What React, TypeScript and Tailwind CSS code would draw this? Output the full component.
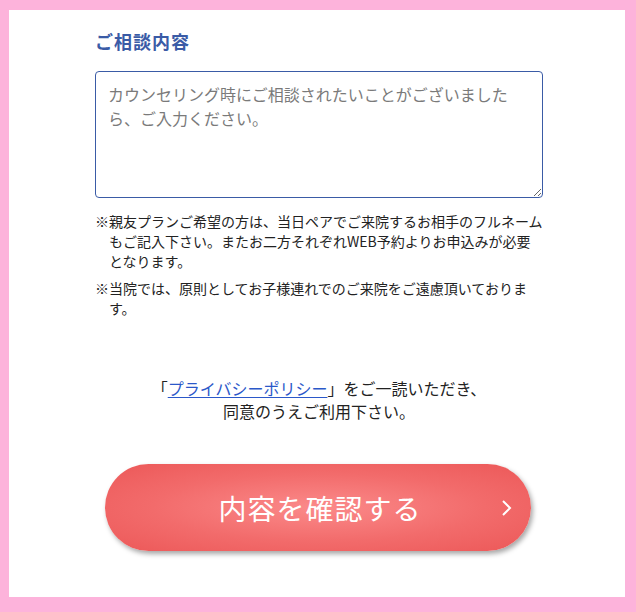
export default function App() {
  return (
    <div
      className="w-[636px] h-[612px] bg-[#fdb3db] pt-[10px] pl-[9px] pr-[11px] pb-[15px]"
      style={{ fontFamily: '"Noto Sans CJK JP", "Noto Sans", sans-serif' }}
    >
      <div className="h-full bg-white">
        <div className="ml-[86px] w-[448px] pt-[18px]">
          <h2 className="text-[18px] font-bold text-[#3a5ba6] leading-[26px] tracking-[1px]">ご相談内容</h2>
          <textarea
            className="mt-[17px] block w-[448px] h-[127px] rounded-[4px] border border-[#3a5ba6] px-[12px] py-[10px] text-[16px] leading-[24px] text-[#333] placeholder:text-[#7a7a7a] outline-none"
            placeholder="カウンセリング時にご相談されたいことがございましたら、ご入力ください。"
          />
          <div className="mt-[13px] text-[14px] leading-[20px] text-[#222]">
            <p className="pl-[14px] -indent-[14px]">
              ※親友プランご希望の方は、当日ペアでご来院するお相手のフルネームもご記入下さい。またお二方それぞれWEB予約よりお申込みが必要となります。
            </p>
            <p className="mt-[7px] pl-[14px] -indent-[14px]">
              ※当院では、原則としてお子様連れでのご来院をご遠慮頂いております。
            </p>
          </div>
          <p className="mt-[59px] text-center text-[16px] leading-[23px] text-[#222]">
            「<a href="#" className="text-[#2b58c9] underline underline-offset-2">プライバシーポリシー</a>」をご一読いただき、
            <br />
            同意のうえご利用下さい。
          </p>
        </div>
        <div className="flex justify-center pl-[2px] mt-[41px]">
          <button className="relative w-[426px] h-[87px] rounded-full bg-[radial-gradient(ellipse_at_center,#fb8a8a_0%,#f26b6b_55%,#ec5858_100%)] shadow-[2px_3px_5px_rgba(0,0,0,0.35)] text-white text-[28px] tracking-[1px]">
            <span className="pl-[4px]">内容を確認する</span>
            <svg
              className="absolute right-[19px] top-1/2 -translate-y-1/2"
              width="12"
              height="18"
              viewBox="0 0 12 18"
              fill="none"
              stroke="white"
              strokeWidth="2"
            >
              <path d="M3 2l7 7-7 7" />
            </svg>
          </button>
        </div>
      </div>
    </div>
  );
}
